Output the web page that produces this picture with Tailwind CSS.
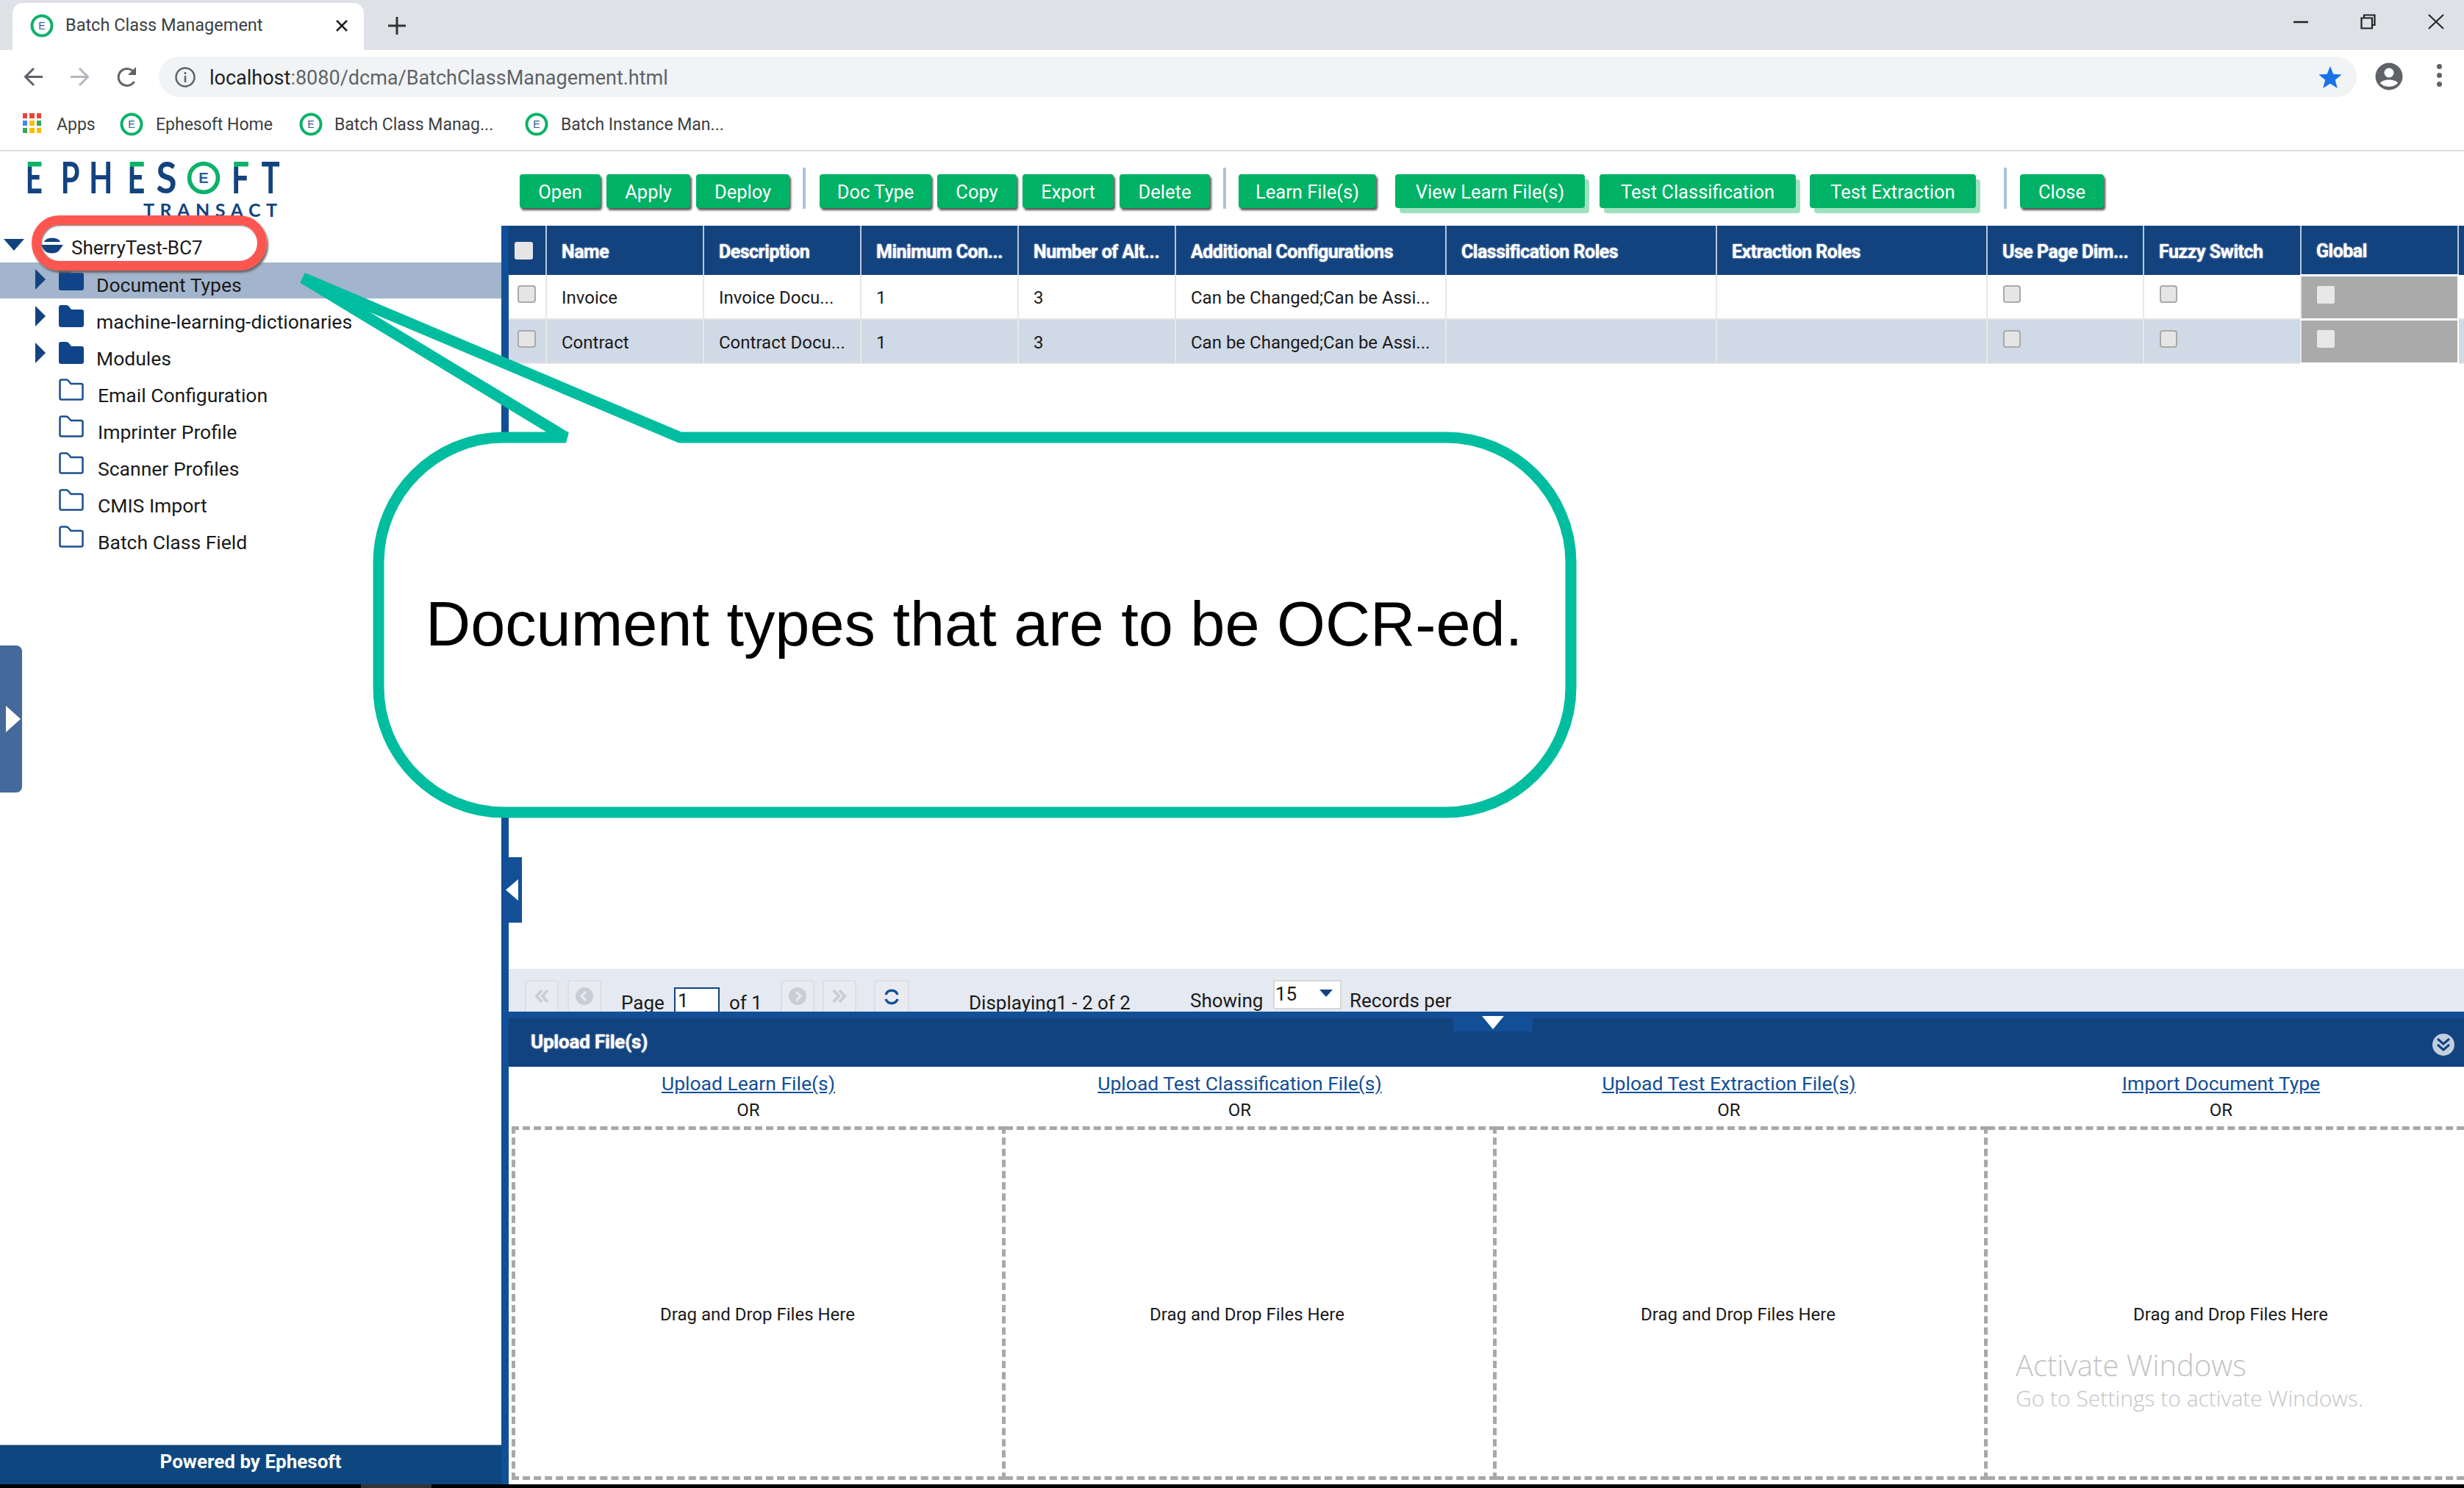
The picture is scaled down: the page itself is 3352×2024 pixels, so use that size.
<!DOCTYPE html>
<html lang="en">
<head>
  <meta charset="UTF-8">
  <meta name="viewport" content="width=device-width, initial-scale=1.0">
  <title>Batch Class Management</title>
  <script src="https://cdn.jsdelivr.net/npm/@tailwindcss/browser@4"></script>
</head>
<body class="relative w-[3352px] h-[2024px] overflow-hidden bg-white font-['Roboto',sans-serif] text-[25px] text-[#1a1a1a]">

  <svg class="hidden">
    <symbol id="fav" viewBox="0 0 32 32">
      <circle cx="16" cy="16" r="13.5" fill="none" stroke="#0bb26a" stroke-width="4"/>
      <text x="16" y="21" font-size="14" font-family="Liberation Sans" text-anchor="middle" fill="#2b5c9a">E</text>
    </symbol>
    <symbol id="folderFull" viewBox="0 0 34 30">
      <path d="M0 3a3 3 0 0 1 3-3h7a5 5 0 0 1 4 2l3 4h14a3 3 0 0 1 3 3v18a3 3 0 0 1-3 3H3a3 3 0 0 1-3-3z" fill="#0f4488"/>
    </symbol>
    <symbol id="folderOpen" viewBox="0 0 34 30">
      <path d="M1.500 3.500a2 2 0 0 1 2-2h6.500a4 4 0 0 1 3 1.500l3.500 4h14a2 2 0 0 1 2 2v17.500a2 2 0 0 1-2 2h-27a2 2 0 0 1-2-2z" fill="none" stroke="#1b4f8d" stroke-width="2.500"/>
    </symbol>
  </svg>

  <!-- browser chrome -->
  <div class="h-[68px] bg-[#dee1e6] flex items-end pl-[17px]">
    <div class="w-[478px] h-[64px] bg-white rounded-t-[14px] flex items-center pl-[24px] pr-[21px] text-[23.500px] text-[#3c4043]">
      <svg class="w-[32px] h-[32px] mr-[16px] -mt-[3px]"><use href="#fav"/></svg>
      <span class="-mt-[3px]">Batch Class Management</span>
      <svg class="ml-auto w-[18px] h-[16px] -mt-[3px]" viewBox="0 0 18 16"><path d="M2 1l14 14M16 1L2 15" stroke="#222" stroke-width="2.500"/></svg>
    </div>
    <svg class="w-[24px] h-[24px] ml-[33px] mb-[21px]" viewBox="0 0 24 24"><path d="M12 0v24M0 12h24" stroke="#333" stroke-width="3"/></svg>
    <div class="ml-auto mb-[28px] flex items-center">
      <svg class="w-[20px] h-[4px]" viewBox="0 0 20 4"><path d="M0 2h20" stroke="#222" stroke-width="2.500"/></svg>
      <svg class="w-[21px] h-[21px] ml-[71px]" viewBox="0 0 21 21"><path d="M5 5V1.500h14.500V15H16M1.500 5.500H16V19.500H1.500z" fill="none" stroke="#222" stroke-width="2.200"/></svg>
      <svg class="w-[22px] h-[21px] ml-[71px] mr-[27px]" viewBox="0 0 22 21"><path d="M1 1l20 19M21 1L1 20" stroke="#222" stroke-width="2"/></svg>
    </div>
  </div>
  <div class="h-[73px] flex items-start pt-[9px]">
    <svg class="w-[27px] h-[27px] ml-[32px] mt-[14px]" viewBox="0 0 27 27"><path d="M26 13.500H3M14 2L2.500 13.500 14 25" fill="none" stroke="#5f6368" stroke-width="3"/></svg>
    <svg class="w-[27px] h-[27px] ml-[36px] mt-[14px]" viewBox="0 0 27 27"><path d="M1 13.500h23M13 2l11.500 11.500L13 25" fill="none" stroke="#b4b7bb" stroke-width="3"/></svg>
    <svg class="w-[29px] h-[28px] ml-[37px] mt-[14px]" viewBox="0 0 29 28"><path d="M23.500 20a11.500 11.500 0 1 1 0-12" fill="none" stroke="#5f6368" stroke-width="3"/><path d="M26 0v11H15z" fill="#5f6368"/></svg>
    <div class="ml-[28px] w-[2990px] h-[55px] rounded-full bg-[#f1f3f4] flex items-center pl-[22px] text-[27px] text-[#5f6368]">
      <svg class="w-[28px] h-[28px] shrink-0" viewBox="0 0 28 28"><circle cx="14" cy="14" r="12.500" fill="none" stroke="#5f6368" stroke-width="2.500"/><path d="M14 12v9M14 7v3" stroke="#5f6368" stroke-width="2.500"/></svg>
      <span class="ml-[19px] pt-[3px]"><span class="text-[#202124]">localhost</span>:8080/dcma/BatchClassManagement.html</span>
      <svg class="ml-auto mr-[20px] w-[32px] h-[30px]" viewBox="0 0 24 23"><path d="M12 0l3.300 8.300 8.700.5-6.800 5.600 2.300 8.600L12 18.200 4.500 23l2.300-8.600L0 8.800l8.700-.5z" fill="#1a73e8"/></svg>
    </div>
    <svg class="w-[38px] h-[38px] ml-[25px] mt-[8px]" viewBox="0 0 38 38"><circle cx="19" cy="19" r="18.500" fill="#5f6368"/><circle cx="19" cy="14" r="6.500" fill="#fff"/><path d="M7 28c3-6 21-6 24 0-6 6.500-18 6.500-24 0z" fill="#fff"/></svg>
    <div class="ml-[46px] mt-[10px] flex flex-col gap-[5px]">
      <span class="w-[7px] h-[7px] rounded-full bg-[#5f6368]"></span>
      <span class="w-[7px] h-[7px] rounded-full bg-[#5f6368]"></span>
      <span class="w-[7px] h-[7px] rounded-full bg-[#5f6368]"></span>
    </div>
  </div>
  <div class="h-[65px] border-b-[2px] border-[#d9dde3] flex items-start pt-[12px] text-[23px] text-[#3c4043]">
    <div class="ml-[31px] mt-[1px] w-[25px] h-[27px] grid grid-cols-3 gap-[3px]">
      <span class="bg-[#ea4335]"></span><span class="bg-[#ea4335]"></span><span class="bg-[#ea4335]"></span>
      <span class="bg-[#4285f4]"></span><span class="bg-[#fbbc05]"></span><span class="bg-[#34a853]"></span>
      <span class="bg-[#34a853]"></span><span class="bg-[#fbbc05]"></span><span class="bg-[#fbbc05]"></span>
    </div>
    <span class="ml-[21px] w-[53px]">Apps</span>
    <svg class="ml-[33px] w-[32px] h-[32px]"><use href="#fav"/></svg>
    <span class="ml-[17px] w-[195px]">Ephesoft Home</span>
    <svg class="w-[32px] h-[32px]"><use href="#fav"/></svg>
    <span class="ml-[16px] w-[259px]">Batch Class Manag...</span>
    <svg class="w-[32px] h-[32px]"><use href="#fav"/></svg>
    <span class="ml-[17px]">Batch Instance Man...</span>
  </div>

  <div class="flex h-[1813px]">
    <!-- left tree -->
    <aside class="w-[682px] flex flex-col text-[26.500px]">
      <div class="h-[93px] pl-[35px] pt-[4px] font-['Lato',sans-serif] text-[#13437f]">
        <div class="flex items-center h-[60px] text-[60px] leading-none font-bold">
          <span class="w-[23px] flex justify-center"><span class="scale-x-[0.68] bg-linear-to-b from-[#0bb26a] from-[28%] to-[#13437f] to-[28%] bg-clip-text text-transparent">E</span></span>
          <span class="ml-[25px] w-[25px] flex justify-center"><span class="scale-x-[0.7]">P</span></span>
          <span class="ml-[14px] w-[31px] flex justify-center"><span class="scale-x-[0.7]">H</span></span>
          <span class="ml-[20px] w-[24px] flex justify-center"><span class="scale-x-[0.7] bg-linear-to-b from-[#0bb26a] from-[28%] to-[#13437f] to-[28%] bg-clip-text text-transparent">E</span></span>
          <span class="ml-[15px] w-[28px] flex justify-center"><span class="scale-x-[0.85]">S</span></span>
          <svg class="ml-[14px] w-[46px] h-[46px] mt-[3px]" viewBox="0 0 32 32"><use href="#fav"/></svg>
          <span class="ml-[15px] w-[23px] flex justify-center"><span class="scale-x-[0.72] bg-linear-to-b from-[#0bb26a] from-[28%] to-[#13437f] to-[28%] bg-clip-text text-transparent">F</span></span>
          <span class="ml-[17px] w-[25px] flex justify-center"><span class="scale-x-[0.7]">T</span></span>
        </div>
        <div class="ml-[160px] mt-[3px] text-[25px] leading-[24px] tracking-[7.500px] font-bold">TRANSACT</div>
      </div>
      <div class="h-[58px] flex items-center pl-[5px]">
        <svg class="w-[28px] h-[16px] mt-[9px]" viewBox="0 0 28 16"><path d="M0 0h28L14 16z" fill="#13437f"/></svg>
        <svg class="ml-[22px] w-[31px] h-[26px] mt-[9px]" viewBox="0 0 31 26"><path d="M5 9C7 2 25 2 27 9ZM0 13H31L26 20C22 26 9 26 5 20Z" fill="#13437f"/></svg>
        <span class="ml-[11px] mt-[18px] text-[26px]">SherryTest-BC7</span>
      </div>
      <div class="h-[49px] bg-[#a2b5cd] flex items-center pl-[48px]">
        <svg class="w-[14px] h-[28px] -mt-[3px]" viewBox="0 0 14 28"><path d="M0 0l14 14L0 28z" fill="#13437f"/></svg>
        <svg class="ml-[18px] w-[34px] h-[30px] -mt-[3px]"><use href="#folderFull"/></svg>
        <span class="ml-[17px] mt-[13px]">Document Types</span>
      </div>
      <div class="h-[50px] flex items-center pl-[48px]">
        <svg class="w-[14px] h-[28px] -mt-[3px]" viewBox="0 0 14 28"><path d="M0 0l14 14L0 28z" fill="#13437f"/></svg>
        <svg class="ml-[18px] w-[34px] h-[30px] -mt-[3px]"><use href="#folderFull"/></svg>
        <span class="ml-[17px] mt-[13px]">machine-learning-dictionaries</span>
      </div>
      <div class="h-[50px] flex items-center pl-[48px]">
        <svg class="w-[14px] h-[28px] -mt-[3px]" viewBox="0 0 14 28"><path d="M0 0l14 14L0 28z" fill="#13437f"/></svg>
        <svg class="ml-[18px] w-[34px] h-[30px] -mt-[3px]"><use href="#folderFull"/></svg>
        <span class="ml-[17px] mt-[13px]">Modules</span>
      </div>
      <div class="h-[50px] flex items-center pl-[80px]">
        <svg class="w-[34px] h-[30px] -mt-[3px]"><use href="#folderOpen"/></svg>
        <span class="ml-[19px] mt-[13px]">Email Configuration</span>
      </div>
      <div class="h-[50px] flex items-center pl-[80px]">
        <svg class="w-[34px] h-[30px] -mt-[3px]"><use href="#folderOpen"/></svg>
        <span class="ml-[19px] mt-[13px]">Imprinter Profile</span>
      </div>
      <div class="h-[50px] flex items-center pl-[80px]">
        <svg class="w-[34px] h-[30px] -mt-[3px]"><use href="#folderOpen"/></svg>
        <span class="ml-[19px] mt-[13px]">Scanner Profiles</span>
      </div>
      <div class="h-[50px] flex items-center pl-[80px]">
        <svg class="w-[34px] h-[30px] -mt-[3px]"><use href="#folderOpen"/></svg>
        <span class="ml-[19px] mt-[13px]">CMIS Import</span>
      </div>
      <div class="h-[50px] flex items-center pl-[80px]">
        <svg class="w-[34px] h-[30px] -mt-[3px]"><use href="#folderOpen"/></svg>
        <span class="ml-[19px] mt-[13px]">Batch Class Field</span>
      </div>
      <div class="mt-auto h-[54px] bg-[#0e4780] border-t border-[#7f9cbd] flex items-center justify-center pb-[8px] text-white font-bold text-[26px]">Powered by Ephesoft</div>
    </aside>

    <!-- main panel -->
    <main class="w-[2670px] border-l-[10px] border-[#134f96] flex flex-col bg-white">
      <div class="h-[101px] -ml-[10px] bg-white flex items-start pl-[25px] pt-[31px] text-white text-[25.500px] [&>button]:pt-[3px]">
        <button class="w-[110px] h-[46px] rounded-[4px] bg-[#00b265] shadow-[2px_3px_3px_#555]">Open</button>
        <button class="ml-[8px] w-[114px] h-[46px] rounded-[4px] bg-[#00b265] shadow-[2px_3px_3px_#555]">Apply</button>
        <button class="ml-[8px] w-[127px] h-[46px] rounded-[4px] bg-[#00b265] shadow-[2px_3px_3px_#555]">Deploy</button>
        <span class="ml-[18px] -mt-[9px] w-[4px] h-[56px] bg-[#aac3de]"></span>
        <button class="ml-[19px] w-[152px] h-[46px] rounded-[4px] bg-[#00b265] shadow-[2px_3px_3px_#555]">Doc Type</button>
        <button class="ml-[8px] w-[108px] h-[46px] rounded-[4px] bg-[#00b265] shadow-[2px_3px_3px_#555]">Copy</button>
        <button class="ml-[8px] w-[124px] h-[46px] rounded-[4px] bg-[#00b265] shadow-[2px_3px_3px_#555]">Export</button>
        <button class="ml-[8px] w-[123px] h-[46px] rounded-[4px] bg-[#00b265] shadow-[2px_3px_3px_#555]">Delete</button>
        <span class="ml-[18px] -mt-[9px] w-[4px] h-[56px] bg-[#aac3de]"></span>
        <button class="ml-[17px] w-[187px] h-[46px] rounded-[4px] bg-[#00b265] shadow-[2px_3px_3px_#555]">Learn File(s)</button>
        <button class="ml-[26px] w-[258px] h-[46px] rounded-[4px] bg-[#00b265] shadow-[6px_7px_0_#9fe0bf]">View Learn File(s)</button>
        <button class="ml-[20px] w-[267px] h-[46px] rounded-[4px] bg-[#00b265] shadow-[6px_7px_0_#9fe0bf]">Test Classification</button>
        <button class="ml-[19px] w-[226px] h-[46px] rounded-[4px] bg-[#00b265] shadow-[6px_7px_0_#9fe0bf]">Test Extraction</button>
        <span class="ml-[38px] -mt-[9px] w-[4px] h-[56px] bg-[#aac3de]"></span>
        <button class="ml-[18px] w-[114px] h-[46px] rounded-[4px] bg-[#00b265] shadow-[2px_3px_3px_#555]">Close</button>
      </div>

      <table class="table-fixed border-collapse w-[2660px] text-[24px]">
        <colgroup>
          <col class="w-[51px]"><col class="w-[214px]"><col class="w-[214px]"><col class="w-[214px]"><col class="w-[214px]"><col class="w-[368px]"><col class="w-[368px]"><col class="w-[368px]"><col class="w-[213px]"><col class="w-[214px]"><col class="w-[214px]"><col class="w-[8px]">
        </colgroup>
        <thead>
          <tr class="h-[67px] bg-[#13437f] text-white text-[25px] font-bold text-left [text-shadow:0_0_2px_#fff] tracking-[-0.5px] [&>th]:pt-[4px]">
            <th class="pl-[8px] border-r-2 border-[#b9c6d8]"><span class="block -mt-[4px] w-[25px] h-[24px] bg-[#e5e5e5] rounded-[3px]"></span></th>
            <th class="pl-[20px] border-r-2 border-[#b9c6d8]">Name</th>
            <th class="pl-[20px] border-r-2 border-[#b9c6d8]">Description</th>
            <th class="pl-[20px] border-r-2 border-[#b9c6d8]">Minimum Con...</th>
            <th class="pl-[20px] border-r-2 border-[#b9c6d8]">Number of Alt...</th>
            <th class="pl-[20px] border-r-2 border-[#b9c6d8]">Additional Configurations</th>
            <th class="pl-[20px] border-r-2 border-[#b9c6d8]">Classification Roles</th>
            <th class="pl-[20px] border-r-2 border-[#b9c6d8]">Extraction Roles</th>
            <th class="pl-[20px] border-r-2 border-[#b9c6d8]">Use Page Dim...</th>
            <th class="pl-[20px] border-r-2 border-[#b9c6d8]">Fuzzy Switch</th>
            <th class="pl-[20px] border-r-2 border-[#b9c6d8]">Global</th>
            <th></th>
          </tr>
        </thead>
        <tbody>
          <tr class="h-[60px] border-b-2 border-[#e4e4e4] [&>td]:pt-[3px]">
            <td class="pl-[12px] border-r-2 border-[#e8e8e8]"><span class="block -mt-[10px] w-[25px] h-[24px] bg-[#e5e5e5] border-2 border-[#aaa] rounded-[4px]"></span></td>
            <td class="pl-[20px] border-r-2 border-[#e8e8e8]">Invoice</td>
            <td class="pl-[20px] border-r-2 border-[#e8e8e8]">Invoice Docu...</td>
            <td class="pl-[20px] border-r-2 border-[#e8e8e8]">1</td>
            <td class="pl-[20px] border-r-2 border-[#e8e8e8]">3</td>
            <td class="pl-[20px] border-r-2 border-[#e8e8e8]">Can be Changed;Can be Assi...</td>
            <td class="border-r-2 border-[#e8e8e8]"></td>
            <td class="border-r-2 border-[#e8e8e8]"></td>
            <td class="pl-[21px] border-r-2 border-[#e8e8e8]"><span class="block -mt-[10px] w-[24px] h-[24px] bg-[#e5e5e5] border-2 border-[#aaa] rounded-[4px]"></span></td>
            <td class="pl-[21px] border-r-2 border-[#e8e8e8]"><span class="block -mt-[10px] w-[24px] h-[24px] bg-[#e5e5e5] border-2 border-[#aaa] rounded-[4px]"></span></td>
            <td class="pl-[21px] bg-[#aaaaaa] border-y-[3px] border-r-2 border-white"><span class="block -mt-[10px] w-[24px] h-[24px] bg-[#e8e8e8] rounded-[2px]"></span></td>
            <td></td>
          </tr>
          <tr class="h-[60px] bg-[#d0d9e6] border-b-2 border-[#e4e4e4] [&>td]:pt-[3px]">
            <td class="pl-[12px] border-r-2 border-[#e8e8e8]"><span class="block -mt-[10px] w-[25px] h-[24px] bg-[#e5e5e5] border-2 border-[#aaa] rounded-[4px]"></span></td>
            <td class="pl-[20px] border-r-2 border-[#e8e8e8]">Contract</td>
            <td class="pl-[20px] border-r-2 border-[#e8e8e8]">Contract Docu...</td>
            <td class="pl-[20px] border-r-2 border-[#e8e8e8]">1</td>
            <td class="pl-[20px] border-r-2 border-[#e8e8e8]">3</td>
            <td class="pl-[20px] border-r-2 border-[#e8e8e8]">Can be Changed;Can be Assi...</td>
            <td class="border-r-2 border-[#e8e8e8]"></td>
            <td class="border-r-2 border-[#e8e8e8]"></td>
            <td class="pl-[21px] border-r-2 border-[#e8e8e8]"><span class="block -mt-[10px] w-[24px] h-[24px] bg-[#e5e5e5] border-2 border-[#aaa] rounded-[4px]"></span></td>
            <td class="pl-[21px] border-r-2 border-[#e8e8e8]"><span class="block -mt-[10px] w-[24px] h-[24px] bg-[#e5e5e5] border-2 border-[#aaa] rounded-[4px]"></span></td>
            <td class="pl-[21px] bg-[#aaaaaa] border-y-[3px] border-r-2 border-white"><span class="block -mt-[10px] w-[24px] h-[24px] bg-[#e8e8e8] rounded-[2px]"></span></td>
            <td></td>
          </tr>
        </tbody>
      </table>
      <div class="flex-1"></div>

      <!-- pager, clipped by the panel below -->
      <div class="h-[58px] overflow-hidden bg-[#e5e9f1] flex items-start pl-[22px] pt-[15px] text-[26px]">
        <span class="w-[46px] h-[60px] rounded-[4px] bg-[#e9ebf0] border-2 border-[#dcdfe5] flex justify-center pt-[10px] text-[#c9ced6]"><svg class="w-[20px] h-[20px]" viewBox="0 0 20 20"><path d="M10 2L3 10l7 8M18 2l-7 8 7 8" fill="none" stroke="currentColor" stroke-width="4"/></svg></span>
        <span class="ml-[12px] w-[46px] h-[60px] rounded-[4px] bg-[#e9ebf0] border-2 border-[#dcdfe5] flex justify-center pt-[8px]"><svg class="w-[24px] h-[24px]" viewBox="0 0 24 24"><circle cx="12" cy="12" r="12" fill="#c9ced6"/><path d="M14 6l-6 6 6 6" fill="none" stroke="#e9ebf0" stroke-width="3"/></svg></span>
        <span class="ml-[27px] mt-[19px] leading-[24px] w-[72px]">Page</span>
        <span class="mt-[10px] w-[62px] h-[50px] bg-white border-2 border-[#13437f] pl-[3px] leading-[32px]">1</span>
        <span class="ml-[13px] mt-[19px] leading-[24px] w-[70px]">of 1</span>
        <span class="w-[46px] h-[60px] rounded-[4px] bg-[#e9ebf0] border-2 border-[#dcdfe5] flex justify-center pt-[8px]"><svg class="w-[24px] h-[24px]" viewBox="0 0 24 24"><circle cx="12" cy="12" r="12" fill="#c9ced6"/><path d="M10 6l6 6-6 6" fill="none" stroke="#e9ebf0" stroke-width="3"/></svg></span>
        <span class="ml-[11px] w-[46px] h-[60px] rounded-[4px] bg-[#e9ebf0] border-2 border-[#dcdfe5] flex justify-center pt-[10px] text-[#c9ced6]"><svg class="w-[20px] h-[20px]" viewBox="0 0 20 20"><path d="M2 2l7 8-7 8M10 2l7 8-7 8" fill="none" stroke="currentColor" stroke-width="4"/></svg></span>
        <span class="ml-[24px] w-[48px] h-[60px] rounded-[4px] bg-[#e9ebf0] border-2 border-[#dcdfe5] flex justify-center pt-[8px]"><svg class="w-[24px] h-[26px]" viewBox="0 0 24 26"><path d="M4 10a8.500 8.500 0 0 1 16 0M20 16a8.500 8.500 0 0 1-16 0" fill="none" stroke="#134f96" stroke-width="3.500"/></svg></span>
        <span class="ml-[81px] mt-[19px] leading-[24px] w-[301px]">Displaying1 - 2 of 2</span>
        <span class="mt-[9px] w-[113px]">Showing</span>
        <span class="w-[93px] h-[40px] bg-white border-2 border-[#d8d8d8] flex items-start pl-[1px] leading-[34px]">15<svg class="ml-auto mr-[10px] mt-[11px] w-[18px] h-[10px]" viewBox="0 0 18 10"><path d="M0 0h18L9 10z" fill="#13437f"/></svg></span>
        <span class="ml-[11px] mt-[9px]">Records per</span>
      </div>

      <div class="relative h-[75px] bg-[#13437f] border-t-[9px] border-[#134f96] flex items-center pl-[30px] text-white font-bold text-[26px] tracking-[-0.2px] [text-shadow:0_0_2px_#fff]">
        <span class="-mt-[1px]">Upload File(s)</span>
        <span class="absolute -top-[9px] left-[1285px] w-[108px] h-[27px] bg-[#134f96] flex justify-center pt-[6px]"><svg class="w-[30px] h-[18px]" viewBox="0 0 30 18"><path d="M0 0h30L15 18z" fill="#fff"/></svg></span>
        <svg class="absolute right-[13px] top-[21px] w-[30px] h-[30px]" viewBox="0 0 30 30"><circle cx="15" cy="15" r="15" fill="#c2cfdf"/><path d="M7 7l8 7 8-7M7 15l8 7 8-7" fill="none" stroke="#13437f" stroke-width="3"/></svg>
      </div>

      <div class="flex-none h-[568px] pl-[4px] grid grid-cols-[672px_668px_668px_648px] grid-rows-[81px_481px] text-[24px]">
        <div class="text-center pr-[28px]"><a class="block mt-[9px] leading-[28px] text-[26.500px] text-[#134f96] underline" href="#">Upload Learn File(s)</a><div class="mt-[8px] leading-[28px]">OR</div></div>
        <div class="text-center pr-[31px]"><a class="block mt-[9px] leading-[28px] text-[26.500px] text-[#134f96] underline" href="#">Upload Test Classification File(s)</a><div class="mt-[8px] leading-[28px]">OR</div></div>
        <div class="text-center pr-[36px]"><a class="block mt-[9px] leading-[28px] text-[26.500px] text-[#134f96] underline" href="#">Upload Test Extraction File(s)</a><div class="mt-[8px] leading-[28px]">OR</div></div>
        <div class="text-center pr-[13px]"><a class="block mt-[9px] leading-[28px] text-[26.500px] text-[#134f96] underline" href="#">Import Document Type</a><div class="mt-[8px] leading-[28px]">OR</div></div>
        <div class="border-[5px] border-dashed border-[#a8a8a8] flex items-center justify-center pt-[30px] pr-[3px]">Drag and Drop Files Here</div>
        <div class="border-[5px] border-l-0 border-dashed border-[#a8a8a8] flex items-center justify-center pt-[30px] pr-[6px]">Drag and Drop Files Here</div>
        <div class="border-[5px] border-l-0 border-dashed border-[#a8a8a8] flex items-center justify-center pt-[30px] pr-[6px]">Drag and Drop Files Here</div>
        <div class="border-[5px] border-l-0 border-r-0 border-dashed border-[#a8a8a8] flex items-center justify-center pl-[13px] pt-[30px]">Drag and Drop Files Here</div>
      </div>
    </main>
  </div>
  <div class="h-[5px] bg-black pl-[491px]"><div class="w-[96px] h-[5px] bg-[#333]"></div></div>

  <!-- overlays: annotation, side tabs, watermark -->
  <div class="absolute left-0 top-[878px] w-[30px] h-[200px] bg-[#44699a] rounded-r-[8px] flex items-center pl-[8px]">
    <svg class="w-[20px] h-[36px]" viewBox="0 0 20 36"><path d="M0 0l20 18L0 36z" fill="#fff"/></svg>
  </div>
  <div class="absolute left-[683px] top-[1166px] w-[27px] h-[89px] bg-[#134f96] flex items-center pl-[5px]">
    <svg class="w-[17px] h-[29px]" viewBox="0 0 17 29"><path d="M17 0L0 14.500 17 29z" fill="#fff"/></svg>
  </div>
  <div class="absolute left-[43px] top-[293px] w-[320px] h-[75px] rounded-full bg-transparent border-[13px] border-[#fd5650] shadow-[2px_3px_3px_#666,inset_1px_1px_2px_#666]"></div>
  <svg class="absolute left-0 top-0 w-[3352px] h-[2024px] pointer-events-none" viewBox="0 0 3352 2024">
    <path d="M925 595H1967C2060 595 2137 672 2137 765V935C2137 1028 2060 1105 1967 1105H685C592 1105 515 1028 515 935V765C515 672 592 595 685 595H770L412 378Z" fill="#fff" stroke="#00bda0" stroke-width="15" stroke-linejoin="bevel"/>
  </svg>
  <div class="absolute left-[579px] top-[800px] leading-[98px] text-[84.700px] text-black font-['Liberation_Sans',sans-serif]">Document types that are to be OCR-ed.</div>
  <div class="absolute left-[2742px] top-[1832px] font-['Open_Sans',sans-serif] font-light text-[#c4c4c4]">
    <div class="text-[40px] leading-[50px]">Activate Windows</div>
    <div class="text-[30px] leading-[40px]">Go to Settings to activate Windows.</div>
  </div>
</body>
</html>
